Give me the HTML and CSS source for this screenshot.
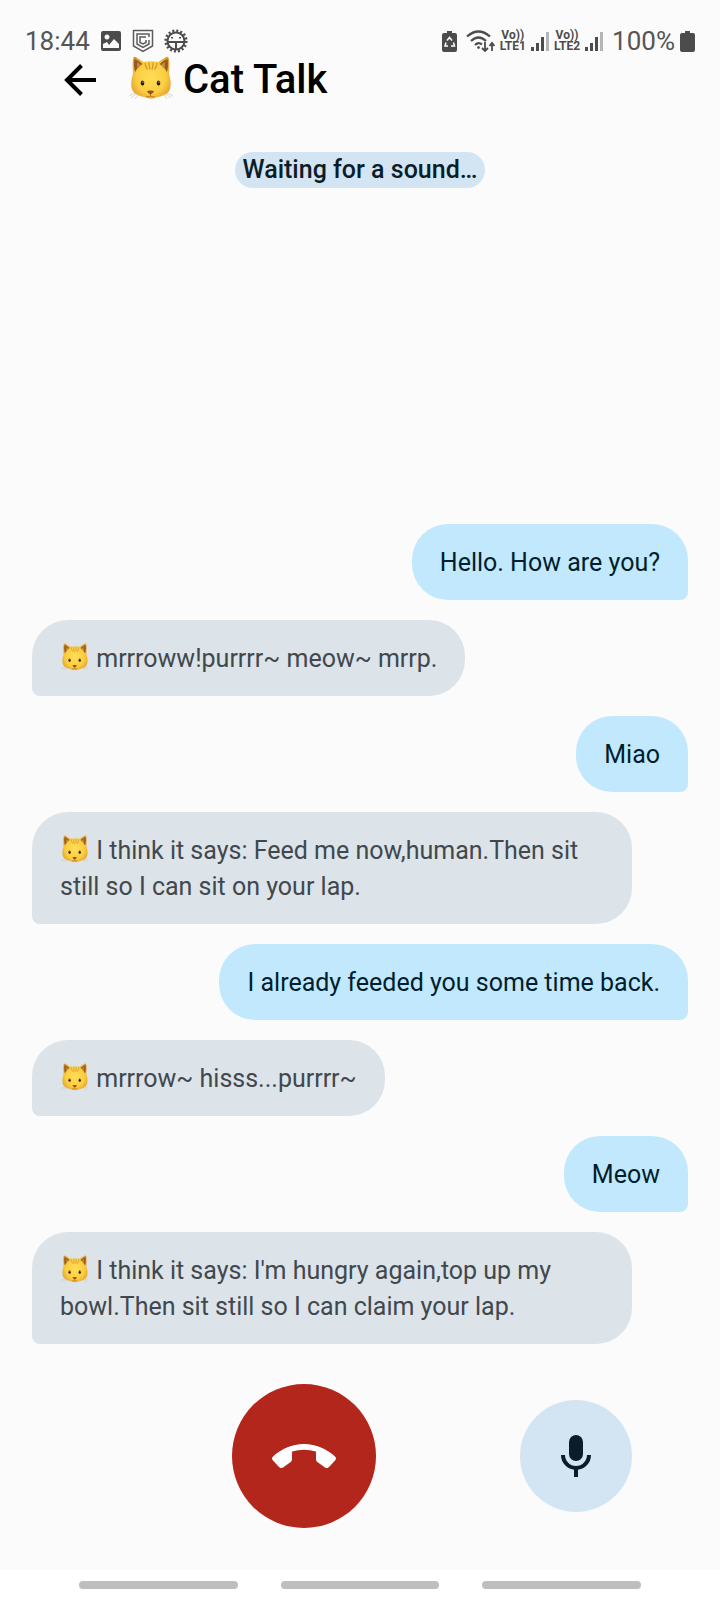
FILE: index.html
```html
<!DOCTYPE html>
<html lang="en">
<head>
    <meta charset="UTF-8">
    <meta name="viewport" content="width=device-width, initial-scale=1.0">
    <title>Cat Talk</title>
    <link rel="stylesheet" href="styles.css">
</head>
<body>
    <!-- shared cat face -->
    <svg class="defs" width="0" height="0" aria-hidden="true">
        <defs>
            <radialGradient id="fur" cx="50%" cy="50%" r="62%">
                <stop offset="0" stop-color="#ffde55"/>
                <stop offset="0.6" stop-color="#fbcd42"/>
                <stop offset="1" stop-color="#dd9826"/>
            </radialGradient>
            <symbol id="cat" viewBox="0 0 44 44">
                <path d="M4 18C3.500 11 3.500 5 4.500 1.500Q5.500 0 7.500 1.500L14.500 6Q22 4.500 29 6L36.500 1.500Q38.500 0 39.500 1.500C40.500 5 40.500 11 40 18C42 24 43 32 39 36.500C35 40.500 29 40.500 26 42Q22 43.500 18 42C15 40.500 9 40.500 5 36.500C1 32 2 24 4 18Z" fill="url(#fur)"/>
                <path d="M5.500 14Q4.500 7 5.500 3Q9 4 13.500 8Q8 11 6.500 16Z" fill="#945c20"/>
                <path d="M38.500 14Q39.500 7 38.500 3Q35 4 30.500 8Q36 11 37.500 16Z" fill="#945c20"/>
                <path d="M8.500 13Q8 9 8 6L12 9Z M35.500 13Q36 9 36 6L32 9Z" fill="#c98a3d"/>
                <path d="M16 7Q16.500 11 18.500 13.500M20 6.500Q20 11 21 13.500M24 6.500Q24 11 23 13.500M28 7Q27.500 11 25.500 13.500" fill="none" stroke="#d69a2c" stroke-width="1.300"/>
                <ellipse cx="13.500" cy="27" rx="1.800" ry="2.600" fill="#2b1a0a"/>
                <ellipse cx="29.500" cy="27" rx="1.800" ry="2.600" fill="#2b1a0a"/>
                <circle cx="14" cy="26" r=".6" fill="#fff"/>
                <circle cx="30" cy="26" r=".6" fill="#fff"/>
                <path d="M18 35Q21.500 33.800 25 35Q24 38 21.500 38.500Q19 38 18 35Z" fill="#94501c"/>
                <path d="M21.500 38V40M21.500 40Q19.500 41.500 17.500 40.500M21.500 40Q23.500 41.500 25.500 40.500" fill="none" stroke="#b06c1c" stroke-width=".9"/>
                <path d="M6 37L0 40M7 38L2 42M9 39L6 43M38 37L44 40M37 38L42 42M35 39L38 43" fill="none" stroke="#cfc5b4" stroke-width=".7"/>
            </symbol>
            <symbol id="signal" viewBox="0 0 18 20">
                <path d="M0 16h3v4H0zM5 12h3v8H5zM10 6h3v14h-3z" fill="#4c4c4c"/>
                <path d="M15 1h3v19h-3z" fill="#b5b5b5"/>
            </symbol>
        </defs>
    </svg>

    <div class="status-bar">
        <div class="status-left">
            <span class="clock">18:44</span>
            <svg width="22" height="22" viewBox="0 0 22 22">
                <path fill-rule="evenodd" d="M3 1h16q2 0 2 2v16q0 2-2 2H3q-2 0-2-2V3q0-2 2-2zM7 4.500a2.500 2.500 0 1 0 .01 0zM3 14v4h16v-4l-5-5-5 6-2-3z" fill="#4c4c4c"/>
            </svg>
            <svg width="22" height="24" viewBox="0 0 22 24" fill="none" stroke="#5c5c5c" stroke-width="1.500">
                <path d="M1.500 1.500h19v15.500L11 22.500 1.500 17z"/>
                <path d="M17 8V5H5v10l6 3.500 6-3.500v-4"/>
                <path d="M14 8H8v5.500l3 1.500 3-1.500V11"/>
            </svg>
            <svg width="24" height="24" viewBox="0 0 24 24" fill="none" stroke="#4c4c4c">
                <circle cx="12" cy="12" r="10.300" stroke-width="2.600" stroke-dasharray="2 2.045"/>
                <circle cx="12" cy="12" r="8.500" stroke-width="2"/>
                <path d="M3.500 13h17M12 13v8M8 8v1.500M16 8v1.500" stroke-width="2"/>
            </svg>
        </div>
        <div class="status-right">
            <svg width="15" height="21" viewBox="0 0 15 21">
                <path d="M5 0h5v2h3q2 0 2 2v15q0 2-2 2H2q-2 0-2-2V4q0-2 2-2h3z" fill="#4c4c4c"/>
                <path d="M5 9.500L7.500 6.500 10 9.500M11.500 11.500L12.500 15H9M6 15H3L4 11.500" fill="none" stroke="#fff" stroke-width="1.500"/>
            </svg>
            <svg class="wifi" width="29" height="22" viewBox="0 0 29 22" fill="none" stroke="#4c4c4c" stroke-width="2.200">
                <path d="M1 6.500Q12.500-3.500 24 6.500M5 11Q12.500 4 20 11M9 15Q12.500 11.500 16 14.500"/>
                <circle cx="12.500" cy="17.500" r="1" fill="#4c4c4c" stroke-width="1"/>
                <path d="M19 12v9M16 18l3 3 3-3M26 21v-8M23.500 16l2.500-3 2.500 3" stroke-width="1.800"/>
            </svg>
            <span class="lte">Vo))<br>LTE1</span>
            <svg width="18" height="20"><use href="#signal"/></svg>
            <span class="lte">Vo))<br>LTE2</span>
            <svg width="18" height="20"><use href="#signal"/></svg>
            <span class="battery">100%</span>
            <svg width="15" height="21" viewBox="0 0 15 21">
                <path d="M5 0h5v2h3q2 0 2 2v15q0 2-2 2H2q-2 0-2-2V4q0-2 2-2h3z" fill="#4c4c4c"/>
            </svg>
        </div>
    </div>

    <header>
        <button class="back" aria-label="Back">
            <svg width="32" height="32" viewBox="0 0 32 32" fill="none" stroke="#000" stroke-width="4">
                <path d="M32 16H3M17.500 1.500L3 16l14.500 14.500"/>
            </svg>
        </button>
        <svg class="cat-logo" width="44" height="44"><use href="#cat"/></svg>
        <h1>Cat Talk</h1>
    </header>

    <p class="listening">Waiting for a sound…</p>

    <main class="chat">
        <p class="bubble me">Hello. How are you?</p>
        <p class="bubble cat"><svg class="emoji"><use href="#cat"/></svg> mrrroww!purrrr~ meow~ mrrp.</p>
        <p class="bubble me">Miao</p>
        <p class="bubble cat"><svg class="emoji"><use href="#cat"/></svg> I think it says: Feed me now,human.Then sit still so I can sit on your lap.</p>
        <p class="bubble me">I already feeded you some time back.</p>
        <p class="bubble cat"><svg class="emoji"><use href="#cat"/></svg> mrrrow~ hisss...purrrr~</p>
        <p class="bubble me">Meow</p>
        <p class="bubble cat"><svg class="emoji"><use href="#cat"/></svg> I think it says: I'm hungry again,top up my bowl.Then sit still so I can claim your lap.</p>
    </main>

    <div class="controls">
        <button class="hang-up" aria-label="End call">
            <svg width="64" height="24" viewBox="0 0 64 24">
                <path d="M32 0C44 0 55 5 63 12.500Q65 14.500 63 16.500L57 23Q55 25 53 23.500L46 18.500Q44 17.500 44 15.500V7.500Q32 4 20 7.500V15.500Q20 17.500 18 18.500L11 23.500Q9 25 7 23L1 16.500Q-1 14.500 1 12.500C9 5 20 0 32 0Z" fill="#fff"/>
            </svg>
        </button>
        <button class="mic" aria-label="Speak">
            <svg width="30" height="42" viewBox="0 0 30 42">
                <rect x="8" y="0" width="14" height="26" rx="7" fill="#0b1d29"/>
                <path d="M2 20a13 13 0 0 0 26 0M15 33v9" fill="none" stroke="#0b1d29" stroke-width="4"/>
            </svg>
        </button>
    </div>

    <div class="nav-bar">
        <span></span>
        <span></span>
        <span></span>
    </div>
</body>
</html>
```

FILE: styles.css
```css
* {
    box-sizing: border-box;
}
body {
    font-family: Roboto, sans-serif;
    background-color: #fbfbfb;
    margin: 0;
    display: flex;
    flex-direction: column;
    min-height: 100vh;
}
h1, p {
    margin: 0;
}
button {
    border: none;
    padding: 0;
    display: flex;
    align-items: center;
    justify-content: center;
    cursor: pointer;
}
svg {
    flex: none;
}
.defs {
    position: absolute;
}

/* status bar */
.status-bar {
    display: flex;
    justify-content: space-between;
    padding: 26px 25px 0 25px;
    height: 56px;
    color: #555;
    font-size: 26px;
    line-height: 30px;
}
.status-left, .status-right {
    display: flex;
    align-items: center;
}
.status-left {
    gap: 10px;
}
.status-right {
    gap: 5px;
}
.wifi {
    margin-left: 4px;
}
.lte {
    font-size: 12px;
    font-weight: 700;
    line-height: 11px;
    text-align: center;
    color: #4c4c4c;
}
.battery {
    margin-left: 4px;
}

/* title */
header {
    display: flex;
    align-items: center;
    height: 48px;
    padding-left: 64px;
}
.back {
    background: none;
}
.cat-logo {
    margin: 0 10px 4px 33px;
}
h1 {
    font-size: 40px;
    font-weight: 500;
    line-height: 48px;
}
.listening {
    align-self: center;
    margin-top: 48px;
    padding: 0 8px;
    border-radius: 18px;
    background-color: #d3e5f3;
    color: #0b1d29;
    font-size: 25px;
    font-weight: 500;
    line-height: 36px;
}

/* messages */
.chat {
    flex: 1;
    display: flex;
    flex-direction: column;
    justify-content: flex-end;
    gap: 20px;
    padding: 20px 32px 0;
}
.bubble {
    max-width: 600px;
    padding: 21px 28px 19px;
    border-radius: 36px;
    font-size: 25px;
    line-height: 36px;
}
.me {
    align-self: flex-end;
    border-bottom-right-radius: 8px;
    background-color: #c2e8fe;
    color: #001e2d;
}
.cat {
    align-self: flex-start;
    border-bottom-left-radius: 8px;
    background-color: #dce3e9;
    color: #41484d;
}
.emoji {
    width: 30px;
    height: 28px;
    vertical-align: -4px;
}

/* call buttons */
.controls {
    display: flex;
    align-items: center;
    justify-content: space-between;
    padding: 40px 88px 42px;
}
.controls::before {
    content: "";
}
.hang-up {
    width: 144px;
    height: 144px;
    border-radius: 50%;
    background-color: #b3261b;
}
.mic {
    width: 112px;
    height: 112px;
    border-radius: 50%;
    background-color: #d3e5f3;
}

.nav-bar {
    display: flex;
    align-items: center;
    gap: 43px;
    height: 30px;
    padding: 0 79px;
    background-color: #fff;
}
.nav-bar span {
    flex: 1;
    height: 8px;
    border-radius: 4px;
    background-color: #bebebe;
}
```
